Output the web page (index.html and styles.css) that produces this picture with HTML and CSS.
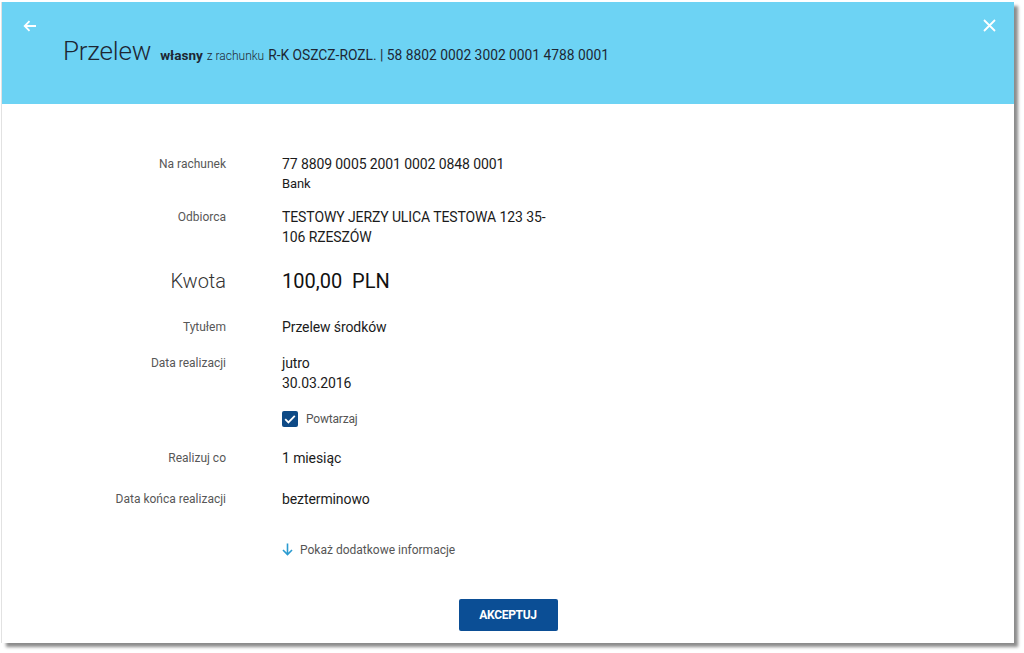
FILE: index.html
```html
<!DOCTYPE html>
<html lang="pl">
<head>
<meta charset="utf-8">
<title>Przelew</title>
<link rel="stylesheet" href="styles.css">
</head>
<body>
<div class="panel">
  <header class="head">
    <div class="head-top">
      <svg class="back" width="14" height="12" viewBox="0 0 14 12"><path d="M13 6H2M6.5 1.2L1.7 6l4.8 4.8" fill="none" stroke="#fff" stroke-width="1.8"/></svg>
      <svg class="close" width="13" height="13" viewBox="0 0 13 13"><path d="M1 1l11 11M12 1L1 12" fill="none" stroke="#fff" stroke-width="1.8"/></svg>
    </div>
    <h1 class="title"><span class="t-main">Przelew</span><span class="t-bold">własny</span><span class="t-light">z rachunku</span><span class="t-acc">R-K OSZCZ-ROZL. | 58 8802 0002 3002 0001 4788 0001</span></h1>
  </header>
  <main class="body">
    <div class="grid">
      <div class="lbl r1">Na rachunek</div>
      <div class="val r1">77 8809 0005 2001 0002 0848 0001<div class="sub">Bank</div></div>

      <div class="lbl r2">Odbiorca</div>
      <div class="val r2">TESTOWY JERZY ULICA TESTOWA 123 35-106 RZESZÓW</div>

      <div class="lbl big r3">Kwota</div>
      <div class="val big r3">100,00&nbsp; PLN</div>

      <div class="lbl r4">Tytułem</div>
      <div class="val r4">Przelew środków</div>

      <div class="lbl r5">Data realizacji</div>
      <div class="val r5">jutro<br>30.03.2016</div>

      <div class="lbl r6"></div>
      <div class="val r6 check"><span class="box"><svg width="12" height="10" viewBox="0 0 12 10"><path d="M1.2 5.2l3.2 3.2L10.8 1.8" fill="none" stroke="#fff" stroke-width="1.8"/></svg></span><span class="chk-lbl">Powtarzaj</span></div>

      <div class="lbl r7">Realizuj co</div>
      <div class="val r7">1 miesiąc</div>

      <div class="lbl r8">Data końca realizacji</div>
      <div class="val r8">bezterminowo</div>

      <div class="lbl r9"></div>
      <div class="val r9 more"><svg width="11" height="13" viewBox="0 0 11 13"><path d="M5.5 0.5v11M1 7l4.5 4.6L10 7" fill="none" stroke="#2b9bd0" stroke-width="1.6"/></svg><span>Pokaż dodatkowe informacje</span></div>
    </div>
    <div class="actions"><button class="btn">AKCEPTUJ</button></div>
  </main>
</div>
</body>
</html>
```

FILE: styles.css
```css
html, body { margin: 0; padding: 0; background: #fff; }
body { font-family: Roboto, "Liberation Sans", Arial, sans-serif; width: 1024px; height: 653px; overflow: hidden; padding: 2px 0 0 2px; box-sizing: border-box; }

.panel {
  width: 1012px;
  height: 641px;
  background: #fff;
  box-shadow: 4px 4px 3px rgba(0,0,0,0.45), -1px 0 0 #e2e2e2;
  display: flex;
  flex-direction: column;
}

.head {
  background: #6dd3f4;
  height: 102px;
  box-sizing: border-box;
  padding: 17px 18px 0 21px;
}
.head-top { display: flex; justify-content: space-between; align-items: flex-start; height: 14px; }
.back { margin-top: 1px; }
.close { margin-top: 0; }

.title { margin: 3px 0 0 40px; font-weight: normal; display: flex; align-items: baseline; color: #1d2733; white-space: nowrap; }
.t-main { font-size: 26px; font-weight: 300; margin-right: 9px; letter-spacing: -0.2px; }
.t-bold { font-size: 13.5px; font-weight: 700; margin-right: 4px; }
.t-light { font-size: 12px; font-weight: 300; margin-right: 4px; color: #1d2733; }
.t-acc { font-size: 13.8px; font-weight: 400; }

.body { flex: 1; display: flex; flex-direction: column; padding-top: 50px; }
.grid { display: grid; grid-template-columns: 224px 270px; column-gap: 56px; align-items: start; }

.lbl { text-align: right; font-size: 12px; color: #575757; line-height: 20px; }
.val { font-size: 14px; color: #1b1b1b; line-height: 20px; letter-spacing: -0.1px; }
.sub { font-size: 13px; }
.lbl.big { font-size: 20px; font-weight: 300; color: #333; line-height: 28px; }
.val.big { font-size: 20px; color: #111; line-height: 28px; letter-spacing: 0; }

.r2 { margin-top: 13px; }
.r3 { margin-top: 20px; }
.r4 { margin-top: 22px; }
.r5 { margin-top: 16px; }
.r6 { margin-top: 18px; }
.r7 { margin-top: 21px; }
.r8 { margin-top: 21px; }
.r9 { margin-top: 31px; }

.check { display: flex; align-items: center; height: 16px; line-height: 16px; }
.box { width: 16px; height: 16px; border-radius: 2px; background: #0e4a86; display: flex; align-items: center; justify-content: center; margin-right: 8px; }
.chk-lbl { font-size: 12px; color: #555; letter-spacing: -0.2px; }

.more { display: flex; align-items: center; gap: 7px; font-size: 12px; color: #555; letter-spacing: 0; }
.more svg { margin-top: -2px; }

.actions { display: flex; justify-content: center; margin-top: 39px; }
.btn {
  width: 99px; height: 32px;
  background: #0b4e95;
  color: #fff;
  border: none;
  border-radius: 2px;
  font-family: Roboto, "Liberation Sans", Arial, sans-serif;
  font-size: 12px;
  font-weight: 700;
  letter-spacing: -0.3px;
  padding: 0;
}
```
